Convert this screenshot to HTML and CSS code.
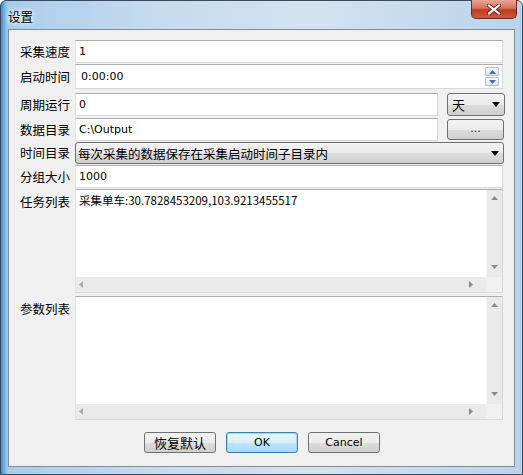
FILE: index.html
```html
<!DOCTYPE html>
<html>
<head>
<meta charset="utf-8">
<link rel="stylesheet" href="styles.css">
</head>
<body>
<div class="window">
  <div class="titlebar">
    <span class="title">设置</span>
    <div class="close"><svg width="14" height="11" viewBox="0 0 14 11"><path d="M2 1.5 L12 9.5 M12 1.5 L2 9.5" stroke="#5a2418" stroke-width="4" stroke-linecap="square"/><path d="M2 1.5 L12 9.5 M12 1.5 L2 9.5" stroke="#fff" stroke-width="2.2" stroke-linecap="square"/></svg></div>
  </div>
  <div class="client">
    <div class="form">
      <div class="row r1"><label class="lbl">采集速度</label><div class="field edit"><span class="txt">1</span></div></div>
      <div class="row r2"><label class="lbl">启动时间</label><div class="field edit spin"><span class="txt t2">0:00:00</span>
        <div class="spinbox"><div class="sb up"><svg width="7" height="4"><path d="M0 4 L3.5 0 L7 4Z" fill="#4a6ea8"/></svg></div><div class="sb dn"><svg width="7" height="4"><path d="M0 0 L3.5 4 L7 0Z" fill="#4a6ea8"/></svg></div></div></div></div>
      <div class="row r3"><label class="lbl">周期运行</label><div class="field edit short"><span class="txt">0</span></div><div class="combo small"><span class="ctext">天</span><svg class="arr" width="8" height="5"><path d="M0 0 L8 0 L4 5Z" fill="#000"/></svg></div></div>
      <div class="row r4"><label class="lbl">数据目录</label><div class="field edit short"><span class="txt">C:\Output</span></div><div class="btn dots">...</div></div>
      <div class="row r5"><label class="lbl">时间目录</label><div class="combo wide"><span class="ctext">每次采集的数据保存在采集启动时间子目录内</span><svg class="arr" width="8" height="5"><path d="M0 0 L8 0 L4 5Z" fill="#000"/></svg></div></div>
      <div class="row r6"><label class="lbl">分组大小</label><div class="field edit"><span class="txt">1000</span></div></div>
      <div class="row r7"><label class="lbl top">任务列表</label>
        <div class="field area">
          <div class="areatext">采集单车:30.7828453209,103.9213455517</div>
          <div class="vscroll"><svg width="7" height="4"><path d="M0 4 L3.5 0 L7 4Z" fill="#8a8a8a"/></svg><svg width="7" height="4"><path d="M0 0 L3.5 4 L7 0Z" fill="#8a8a8a"/></svg></div>
          <div class="hscroll"><svg width="4" height="7"><path d="M4 0 L0 3.5 L4 7Z" fill="#9a9a9a"/></svg><svg width="4" height="7"><path d="M0 0 L4 3.5 L0 7Z" fill="#8a8a8a"/></svg></div>
          <div class="corner"></div>
        </div>
      </div>
      <div class="row r8"><label class="lbl top">参数列表</label>
        <div class="field area">
          <div class="areatext"></div>
          <div class="vscroll"><svg width="7" height="4"><path d="M0 4 L3.5 0 L7 4Z" fill="#8a8a8a"/></svg><svg width="7" height="4"><path d="M0 0 L3.5 4 L7 0Z" fill="#8a8a8a"/></svg></div>
          <div class="hscroll"><svg width="4" height="7"><path d="M4 0 L0 3.5 L4 7Z" fill="#9a9a9a"/></svg><svg width="4" height="7"><path d="M0 0 L4 3.5 L0 7Z" fill="#8a8a8a"/></svg></div>
          <div class="corner"></div>
        </div>
      </div>
    </div>
    <div class="buttons">
      <div class="btn b1">恢复默认</div>
      <div class="btn b2 default">OK</div>
      <div class="btn b3">Cancel</div>
    </div>
  </div>
</div>
</body>
</html>
```
FILE: styles.css
```css
html, body { margin: 0; padding: 0; }
body { width: 523px; height: 475px; overflow: hidden; background: #fff; }
.window {
  width: 523px; height: 475px; box-sizing: border-box;
  background: linear-gradient(90deg, #3a8ccf 0px, #6fb0e0 3px, #a9cdec 7px, #c6dbee 30%, #d3e3f1 60%, #b9d3ea 100%);
  border: 1px solid #3a4a5e; border-radius: 6px 6px 0 0;
  padding: 0 7px 7px 7px;
  display: flex; flex-direction: column;
  font-family: "Noto Sans CJK SC", "Liberation Sans", sans-serif;
}
.titlebar { height: 28px; display: flex; align-items: flex-start; justify-content: space-between; position: relative; }
.title { font-size: 12.5px; color: #000; margin-top: 6px; margin-left: 0px; letter-spacing: 0; text-shadow: 0 0 6px #fff, 0 0 4px #fff; }
.close {
  width: 46px; height: 19px; margin-right: -2px; margin-top: -1px; box-sizing: border-box;
  border: 1px solid #6a2a22; border-top: none; border-radius: 0 0 5px 5px;
  background: linear-gradient(#e9a79a 0%, #d8705c 45%, #c2381f 55%, #cf5a3a 100%);
  display: flex; align-items: center; justify-content: center;
}
.client {
  flex: 1; background: #f0f0f0; border: 1px solid #7d8ea3;
  display: flex; flex-direction: column;
}
.form { display: flex; flex-direction: column; padding-top: 10px; }
.row { display: flex; align-items: center; }
.lbl { width: 61px; text-align: right; font-size: 12.5px; color: #000; padding-right: 5px; flex: none; line-height: 16px; }
.lbl.top { align-self: flex-start; margin-top: 5px; }
.field { box-sizing: border-box; background: #fff; border: 1px solid #d5d9de; border-top-color: #abadb3; border-left-color: #e2e3ea; }
.edit { width: 428px; height: 23px; display: flex; align-items: center; position: relative; }
.edit.short { width: 363px; }
.txt { font-family: "DejaVu Sans", sans-serif; font-size: 11px; padding-left: 3px; color: #000; }
.txt.t2 { padding-left: 5px; }
.r1 { height: 23px; }
.r2 { height: 25px; margin-top: 1px; }
.r2 .edit { height: 25px; }
.r3 { height: 23px; margin-top: 4px; }
.r4 { height: 23px; margin-top: 2px; }
.r5 { height: 22px; margin-top: 1px; }
.r6 { height: 23px; margin-top: 1px; }
.r7 { height: 104px; margin-top: 1px; }
.r8 { height: 124px; margin-top: 3px; }
.spinbox { position: absolute; right: 3px; top: 2px; display: flex; flex-direction: column; gap: 1px; }
.sb { width: 14px; height: 9px; box-sizing: border-box; border: 1px solid #b8bec8; background: linear-gradient(#fafbfc, #dfe5ec); display: flex; align-items: center; justify-content: center; border-radius: 1px; }
.combo {
  box-sizing: border-box; height: 23px; border: 1px solid #707070; border-radius: 3px;
  background: linear-gradient(#f2f2f2 0%, #ebebeb 50%, #dddddd 51%, #cfcfcf 100%);
  display: flex; align-items: center; justify-content: space-between; padding: 0 4px 0 4px;
}
.combo.small { width: 58px; margin-left: 9px; }
.combo.wide { width: 429px; height: 22px; padding-left: 2px; }
.ctext { font-size: 12.5px; color: #000; }
.combo.small .ctext { font-size: 13px; }
.arr { flex: none; }
.btn {
  box-sizing: border-box; border: 1px solid #707070; border-radius: 3px;
  background: linear-gradient(#f2f2f2 0%, #ebebeb 50%, #dddddd 51%, #cfcfcf 100%);
  display: flex; align-items: center; justify-content: center; font-size: 12px; color: #000;
}
.dots { width: 57px; height: 21px; margin-left: 9px; font-family: "DejaVu Sans", sans-serif; font-size: 11px; padding-bottom: 3px; color: #222; }
.area { width: 428px; height: 100%; display: grid; grid-template-columns: 1fr 16px; grid-template-rows: 1fr 15px; }
.areatext { font-family: "Noto Sans CJK SC", sans-serif; font-size: 11.5px; padding: 2px 3px; line-height: 16px; }
.vscroll { background: #eaeaea; border-left: 1px solid #f4f4f4; display: flex; flex-direction: column; justify-content: space-between; align-items: center; padding: 6px 0 8px; }
.hscroll { background: #eaeaea; display: flex; justify-content: space-between; align-items: center; padding: 0 13px 0 3px; }
.hscroll svg:first-child { opacity: 0.8; }
.corner { background: #f0f0f0; }
.buttons { display: flex; justify-content: center; gap: 10px; margin-top: 12px; padding-left: 1px; }
.buttons .btn { width: 72px; height: 21px; }
.buttons .b1 { font-size: 13px; }
.buttons .b3 { font-family: "DejaVu Sans", sans-serif; font-size: 11px; }
.buttons .b2 { font-family: "DejaVu Sans", sans-serif; font-size: 11px; border-color: #3c7fb1; background: linear-gradient(#eaf6fd 0%, #d9f0fc 50%, #bee6fd 51%, #a7d9f5 100%); box-shadow: inset 0 0 0 1px #9fd9f8; }
```
